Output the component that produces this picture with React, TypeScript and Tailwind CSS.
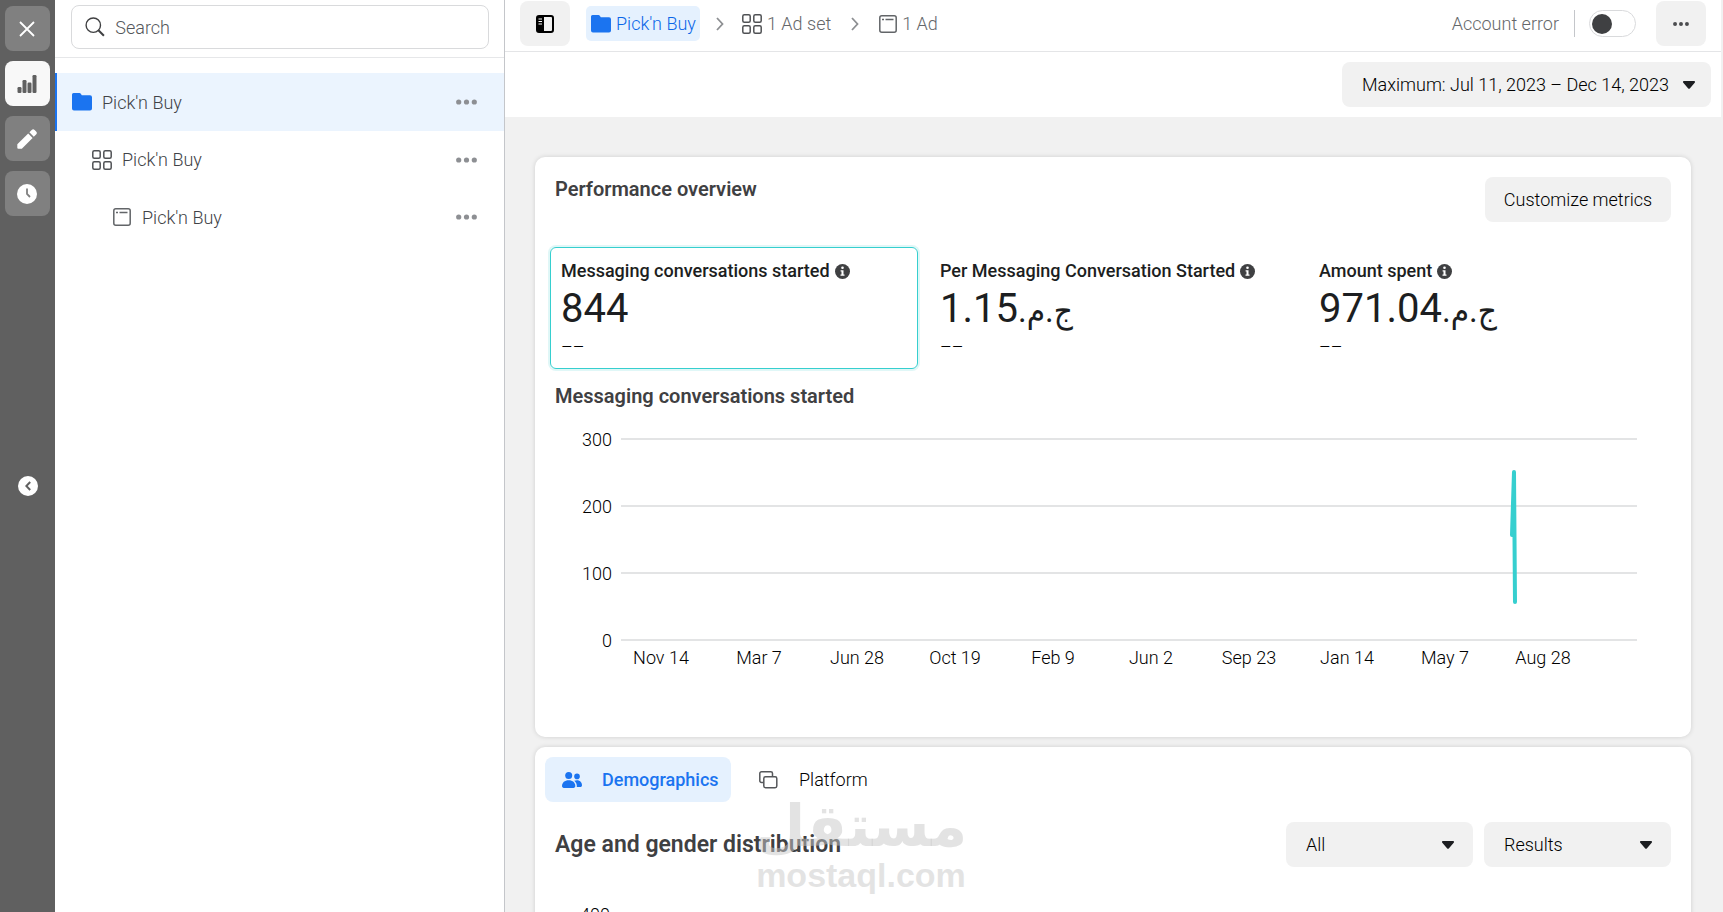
import type { ReactNode } from "react";

const axisLabels = [
	"Nov 14",
	"Mar 7",
	"Jun 28",
	"Oct 19",
	"Feb 9",
	"Jun 2",
	"Sep 23",
	"Jan 14",
	"May 7",
	"Aug 28",
];

const currency = "ج.م.\u200f";

const metrics = [
	{
		label: "Messaging conversations started",
		value: "844",
		money: false,
		active: true,
	},
	{
		label: "Per Messaging Conversation Started",
		value: "1.15",
		money: true,
		active: false,
	},
	{ label: "Amount spent", value: "971.04", money: true, active: false },
];

function FolderIcon() {
	return (
		<svg width="20" height="18" viewBox="0 0 20 18" fill="#1b74f0">
			<path d="M1.500 0h6c.6 0 1 .2 1.300.7L9.800 2.300H18a2 2 0 0 1 2 2V15.500a2 2 0 0 1-2 2H2a2 2 0 0 1-2-2V1.500A1.500 1.500 0 0 1 1.500 0z" />
		</svg>
	);
}

function AdSetIcon() {
	return (
		<svg
			width="20"
			height="20"
			viewBox="0 0 20 20"
			fill="none"
			stroke="#505255"
			strokeWidth="1.500"
		>
			<rect x="0.800" y="0.800" width="7.400" height="7.400" rx="1.500" />
			<rect x="11.800" y="0.800" width="7.400" height="7.400" rx="1.500" />
			<rect x="0.800" y="11.800" width="7.400" height="7.400" rx="1.500" />
			<rect x="11.800" y="11.800" width="7.400" height="7.400" rx="1.500" />
		</svg>
	);
}

function AdIcon() {
	return (
		<svg
			width="18"
			height="18"
			viewBox="0 0 18 18"
			fill="none"
			stroke="#626568"
			strokeWidth="1.500"
		>
			<rect x="0.800" y="0.800" width="16.400" height="16.400" rx="2" />
			<path d="M3 4.500h2M6.500 4.500h8" />
		</svg>
	);
}

function Chevron() {
	return (
		<svg
			width="8"
			height="14"
			viewBox="0 0 8 14"
			fill="none"
			stroke="#8d8f92"
			strokeWidth="1.800"
		>
			<path d="M1 1l5.500 6L1 13" />
		</svg>
	);
}

function Caret({ className = "" }: { className?: string }) {
	return (
		<svg
			width="12"
			height="8"
			viewBox="0 0 12 8"
			fill="#1c1e21"
			className={className}
		>
			<path d="M1 0h10c.9 0 1.300 1 .7 1.700L7 7.200c-.6.700-1.400.7-2 0L.3 1.700C-.3 1 .1 0 1 0z" />
		</svg>
	);
}

function Dots({ size, color }: { size: number; color: string }) {
	return (
		<svg width={size} height="6" viewBox="0 0 21 6" fill={color}>
			<circle cx="2.700" cy="3" r="2.600" />
			<circle cx="10.500" cy="3" r="2.600" />
			<circle cx="18.300" cy="3" r="2.600" />
		</svg>
	);
}

function InfoIcon() {
	return (
		<svg width="15" height="15" viewBox="0 0 15 15">
			<circle cx="7.500" cy="7.500" r="7.500" fill="#3f4042" />
			<circle cx="7.500" cy="3.800" r="1.300" fill="#fff" />
			<path d="M5.600 6.200h2.900v4.200h1v1.300H5.500v-1.300h1V7.500h-.9z" fill="#fff" />
		</svg>
	);
}

function RailButton({
	label,
	active = false,
	children,
}: {
	label: string;
	active?: boolean;
	children: ReactNode;
}) {
	return (
		<button
			type="button"
			aria-label={label}
			className={
				active
					? "flex size-[45px] items-center justify-center rounded-lg bg-[#f8f8f8] pr-px"
					: "flex size-[45px] items-center justify-center rounded-lg bg-[#808080] pr-px"
			}
		>
			{children}
		</button>
	);
}

function Rail() {
	return (
		<nav className="flex w-[55px] shrink-0 flex-col items-center gap-2.5 bg-[#606060] pt-1.5">
			<RailButton label="Close">
				<svg width="16" height="16" viewBox="0 0 16 16" stroke="#fff" strokeWidth="1.800">
					<path d="M1 1l14 14M15 1L1 15" />
				</svg>
			</RailButton>
			<RailButton label="Charts" active>
				<svg width="20" height="18" viewBox="0 0 20 18" fill="#606060">
					<rect x="0.500" y="12" width="4" height="6" rx="1.200" />
					<rect x="5.500" y="5" width="4" height="13" rx="1.200" />
					<rect x="10.500" y="7.500" width="4" height="10.500" rx="1.200" />
					<rect x="15.500" y="0" width="4" height="18" rx="1.200" />
				</svg>
			</RailButton>
			<RailButton label="Edit">
				<svg width="20" height="20" viewBox="0 0 20 20" fill="#fff">
					<path d="M.3 15.300L11.200 4.500l4.400 4.400L4.800 19.700H1.300a1 1 0 0 1-1-1z" />
					<path d="M12.400 3.300l2.300-2.300a2 2 0 0 1 2.900 0l1.500 1.500a2 2 0 0 1 0 2.900l-2.300 2.300z" />
				</svg>
			</RailButton>
			<RailButton label="History">
				<svg width="20" height="20" viewBox="0 0 20 20">
					<circle cx="10" cy="10" r="10" fill="#fff" />
					<path d="M10 4.500V10l3 3" fill="none" stroke="#808080" strokeWidth="1.800" />
				</svg>
			</RailButton>
			<button
				type="button"
				aria-label="Collapse"
				className="mt-[250px] flex size-5 items-center justify-center rounded-full bg-white"
			>
				<svg width="6" height="10" viewBox="0 0 6 10" fill="none" stroke="#606060" strokeWidth="2">
					<path d="M5.200 1L1.300 5l3.900 4" />
				</svg>
			</button>
		</nav>
	);
}

function TreeRow({
	icon,
	className,
}: {
	icon: ReactNode;
	className: string;
}) {
	return (
		<li className={`flex items-center pr-[27px] ${className}`}>
			{icon}
			<a href="#" className="flex-1">
				Pick'n Buy
			</a>
			<button type="button" aria-label="More options">
				<Dots size={21} color="#8d8f93" />
			</button>
		</li>
	);
}

function Tree() {
	return (
		<aside className="w-[450px] shrink-0 border-r border-[#c4c6ca] bg-white">
			<div className="border-b border-[#e6e7e9] pt-[5px] pr-[15px] pb-2 pl-4">
				<label className="flex h-11 items-center gap-2.5 rounded-lg border border-[#d9dadc] px-[13px]">
					<svg
						width="22"
						height="22"
						viewBox="0 0 22 22"
						fill="none"
						stroke="#3f4042"
						strokeWidth="1.500"
					>
						<circle cx="9" cy="9" r="7.800" />
						<path d="M14.500 14.500l6 6" strokeWidth="2.200" />
					</svg>
					<input
						type="text"
						aria-label="Search"
						placeholder="Search"
						className="w-full outline-none placeholder:text-[#55575b]"
					/>
				</label>
			</div>
			<ul className="pt-[15px] text-[#404246]">
				<TreeRow
					icon={<FolderIcon />}
					className="h-[58px] gap-2.5 border-l-2 border-[#1b74f0] bg-[#ebf4fe] pl-[15px]"
				/>
				<TreeRow icon={<AdSetIcon />} className="h-[57px] gap-2.5 pl-[37px]" />
				<TreeRow icon={<AdIcon />} className="h-[58px] gap-[11px] pl-[58px]" />
			</ul>
		</aside>
	);
}

function TopBar() {
	return (
		<header className="flex h-[52px] items-start border-b border-[#e4e5e7] bg-white px-[15px] pt-px text-[#65676a]">
			<button
				type="button"
				aria-label="Toggle side panel"
				className="mr-4 flex h-[45px] w-[50px] items-center justify-center rounded-lg bg-[#f1f1f1]"
			>
				<svg width="18" height="18" viewBox="0 0 18 18">
					<rect x="1" y="1" width="16" height="16" rx="2" fill="none" stroke="#000" strokeWidth="2" />
					<path d="M1 2h7v14H1z" fill="#000" />
					<path d="M2.500 4h3.500M2.500 6.500h3.500M2.500 9h3.500" stroke="#fff" strokeWidth="1" />
				</svg>
			</button>
			<div className="flex h-[45px] flex-1 items-center">
				<a
					href="#"
					className="flex h-[35px] w-[114px] items-center gap-[5px] rounded-[5px] bg-[#e5f1fe] pl-[5px] text-[#0a66e8]"
				>
					<FolderIcon />
					Pick'n Buy
				</a>
				<span className="px-4">
					<Chevron />
				</span>
				<a href="#" className="flex items-center gap-[5px] pl-0.5">
					<AdSetIcon />1 Ad set
				</a>
				<span className="px-5">
					<Chevron />
				</span>
				<a href="#" className="flex items-center gap-[5px]">
					<AdIcon />1 Ad
				</a>
			</div>
			<div className="flex h-[45px] items-center">
				<label htmlFor="status">Account error</label>
				<span className="ml-[15px] h-[27px] w-px bg-[#c4c6ca]" />
				<input
					id="status"
					type="checkbox"
					role="switch"
					className="mr-5 ml-3.5 flex h-[27px] w-[47px] appearance-none items-center rounded-full border border-[#d9dadc] px-0.5 before:size-5 before:rounded-full before:bg-[#3f4042]"
				/>
				<button
					type="button"
					aria-label="More actions"
					className="flex h-[45px] w-[50px] items-center justify-center rounded-lg bg-[#f1f1f1]"
				>
					<Dots size={16} color="#4b4c4f" />
				</button>
			</div>
		</header>
	);
}

function Performance() {
	return (
		<section className="rounded-[10px] bg-white px-5 pt-5 pb-10 shadow-[0_0_5px_rgba(0,0,0,0.14)]">
			<div className="flex items-start justify-between">
				<h2 className="text-[20px] leading-6 font-semibold text-[#3f4042]">
					Performance overview
				</h2>
				<button
					type="button"
					className="h-[45px] w-[186px] rounded-lg bg-[#f1f1f1]"
				>
					Customize metrics
				</button>
			</div>
			<div className="-mx-[5px] mt-[25px] grid grid-cols-3 gap-[11px]">
				{metrics.map((metric) => (
					<div
						key={metric.label}
						className={
							metric.active
								? "rounded-md border border-[#36cfcf] px-2.5 pt-[11px] pb-[9px] shadow-[0_0_0_2px_#e0f7f7]"
								: "rounded-md border border-transparent px-2.5 pt-[11px] pb-[9px]"
						}
					>
						<h3 className="flex items-center gap-[5px] leading-6 font-medium text-[#1c1e21]">
							{metric.label}
							<InfoIcon />
						</h3>
						<p className="h-[52px] text-[40px] leading-[52px] font-normal text-[#1c1e21]">
							{metric.money && (
								<span className="font-[Roboto,'DejaVu_Sans_Condensed','DejaVu_Sans',sans-serif] text-[33px]">
									{currency}
								</span>
							)}
							{metric.value}
						</p>
						<p className="leading-6">––</p>
					</div>
				))}
			</div>
			<h3 className="mt-[15px] text-[20px] leading-6 font-semibold text-[#3f4042]">
				Messaging conversations started
			</h3>
			<svg viewBox="0 0 1116 289" className="w-full text-[18px]" fill="#000">
				{[300, 200, 100, 0].map((tick, i) => (
					<g key={tick}>
						<text x="57" y={38 + i * 67} textAnchor="end">
							{tick}
						</text>
						<path d={`M66 ${31 + i * 67}h1016`} stroke="#e3e4e5" strokeWidth="2" />
					</g>
				))}
				{axisLabels.map((label, i) => (
					<text key={label} x={106 + i * 98} y="256" textAnchor="middle">
						{label}
					</text>
				))}
				<path
					d="M957 127L959 64L960 194"
					fill="none"
					stroke="#36cfcf"
					strokeWidth="4"
					strokeLinecap="round"
					strokeLinejoin="round"
				/>
			</svg>
		</section>
	);
}

function Dropdown({ label, value }: { label: string; value: string }) {
	return (
		<div className="relative">
			<select
				aria-label={label}
				className="h-[45px] w-[187px] appearance-none rounded-lg bg-[#f1f1f1] px-5"
			>
				<option>{value}</option>
			</select>
			<Caret className="pointer-events-none absolute top-[19px] right-[19px]" />
		</div>
	);
}

function Demographics() {
	return (
		<section className="relative rounded-[10px] bg-white p-2.5 shadow-[0_0_5px_rgba(0,0,0,0.14)]">
			<div className="flex">
				<button
					type="button"
					className="flex h-[45px] w-[186px] items-center gap-5 rounded-lg bg-[#e5f1fe] pl-[17px] font-medium text-[#1b74f0]"
				>
					<svg width="20" height="16" viewBox="0 0 20 16" fill="#1b74f0">
						<circle cx="6.700" cy="3.600" r="3.500" />
						<path d="M0 14c0-3.500 2.700-5.800 6.700-5.800s6.600 2.300 6.600 5.800c0 1.100-.7 1.900-1.800 1.900H1.800C.7 15.900 0 15.100 0 14z" />
						<circle cx="15" cy="4.400" r="2.800" />
						<path d="M12.200 8.800c.9-.4 1.800-.6 2.800-.6 3 0 5 2.200 5 5 0 1.100-.7 1.800-1.700 1.800h-3.500c.4-2.500-.7-4.700-2.600-6.200z" />
					</svg>
					Demographics
				</button>
				<button type="button" className="flex h-[45px] items-center gap-[21px] px-7">
					<svg
						width="19"
						height="18"
						viewBox="0 0 19 18"
						fill="none"
						stroke="#55575a"
						strokeWidth="1.500"
					>
						<path d="M4.500 11.500H2.500a1.700 1.700 0 0 1-1.700-1.700V2.500A1.700 1.700 0 0 1 2.500.8h9.300a1.700 1.700 0 0 1 1.700 1.700v2.500" />
						<rect x="4.800" y="5.800" width="13" height="11" rx="1.700" />
					</svg>
					Platform
				</button>
			</div>
			<div className="mt-5 flex items-center justify-between px-2.5">
				<h2 className="text-[23px] leading-7 font-semibold text-[#3f4042]">
					Age and gender distribution
				</h2>
				<div className="flex gap-[11px]">
					<Dropdown label="Audience" value="All" />
					<Dropdown label="Metric" value="Results" />
				</div>
			</div>
			<p className="mt-9 pl-[35px] leading-6">400</p>
			<div className="pointer-events-none absolute top-11 left-[222px] flex w-[208px] flex-col items-center font-bold text-[#c8c8c8]/50">
				<span
					lang="ar"
					dir="rtl"
					className="font-['DejaVu_Sans',sans-serif] text-[58px] leading-[70px]"
				>
					مستقل
				</span>
				<span className="font-['Liberation_Sans',sans-serif] text-[34px] leading-7">
					mostaql.com
				</span>
			</div>
		</section>
	);
}

function App() {
	return (
		<div className="flex h-screen overflow-hidden bg-[#f1f1f1] font-[Roboto,'DejaVu_Sans',sans-serif] text-[18px] font-light text-black">
			<Rail />
			<Tree />
			<main className="min-w-0 flex-1 pr-0.5">
				<TopBar />
				<div className="flex h-[65px] items-center justify-end bg-white px-2.5">
					<button
						type="button"
						className="flex h-[45px] w-[369px] items-center justify-between rounded-lg bg-[#f1f1f1] pr-4 pl-5"
					>
						Maximum: Jul 11, 2023 – Dec 14, 2023
						<Caret />
					</button>
				</div>
				<div className="flex flex-col gap-2.5 px-[30px] pt-10">
					<Performance />
					<Demographics />
				</div>
			</main>
		</div>
	);
}

export default App;
